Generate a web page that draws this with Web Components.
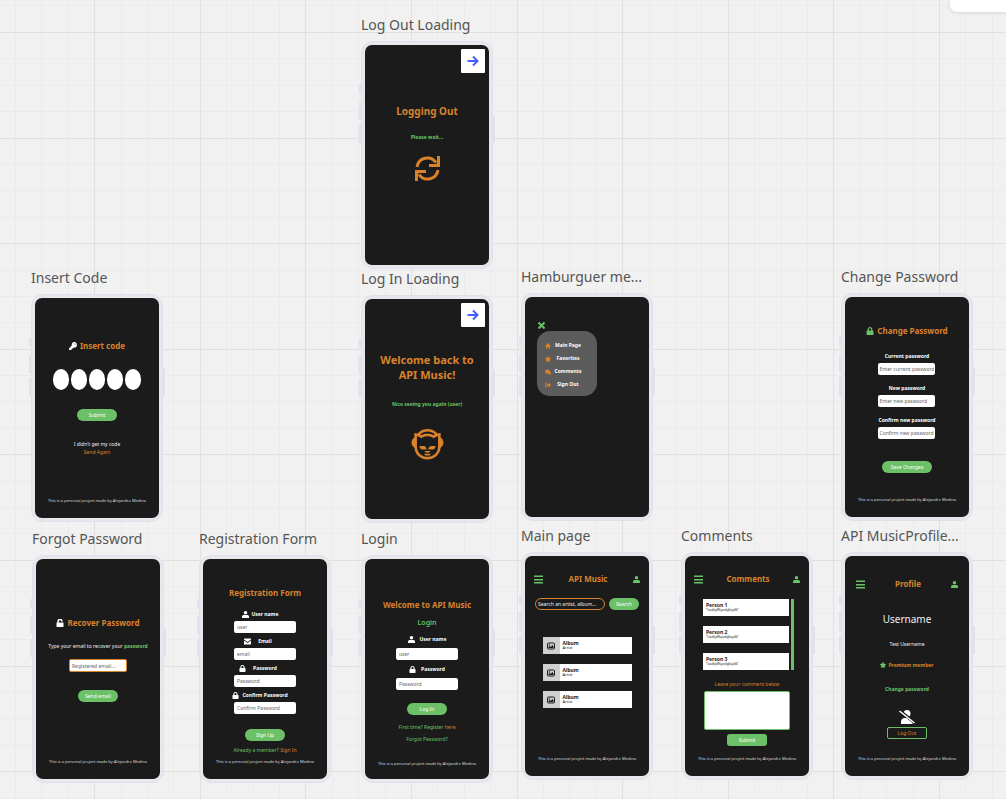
<!DOCTYPE html>
<html lang="en">
<head>
<meta charset="utf-8">
<title>API Music prototype board</title>
<style>
  body { margin: 0; font-family: "Noto Sans", "Open Sans", sans-serif; background: #f1f1f1; }
</style>
</head>
<body>
<proto-board></proto-board>

<template id="board">
  <style>
    :host { display: block; position: relative; min-height: 100vh; overflow: hidden;
      --orange: #d9822b; --green: #6cc168; --ink: #1b1b1b; }
    .grid { position: absolute; inset: 0; width: 100%; height: 100%; }
    .tools { position: absolute; top: -20px; right: -20px; width: 76px; height: 32px; border-radius: 7px;
      background: #fff; box-shadow: 0 1px 4px #0000001c; }
    .col { display: flex; flex-direction: column; }
    .row { display: flex; align-items: center; }
    .end { align-self: flex-end; margin: 4px 4px 0 0; }
    h2, p { margin: 0; }
    h2 { font-size: 8px; line-height: 12px; font-weight: 700; color: var(--orange); display: flex; align-items: center; gap: 3px; }
    h2.big { font-size: 10px; line-height: 16px; }
    h2.hello { font-size: 11px; line-height: 15px; text-align: center; }
    h3 { margin: 0; font-size: 7px; line-height: 8px; font-weight: 600; color: var(--green); }
    p { font-size: 5px; line-height: 8px; color: #eee; white-space: nowrap; }
    p.name { font-size: 10px; line-height: 14px; }
    b, .b { font-weight: 700; }
    .g, .g a { color: var(--green); }
    .o, .g a.o { color: var(--orange); }
    a { color: inherit; text-decoration: none; }
    .head { align-self: stretch; justify-content: space-between; padding: 0 9px; }
    .head.in { padding: 0 11px; }
    .code { gap: 2px; }
    .code input { width: 16px; height: 21px; box-sizing: border-box; border: 0; padding: 0; border-radius: 8px / 10px; background: #fff;
      text-align: center; font: 8px "Noto Sans", sans-serif; }
    .menu { margin: 2px 0 0 12px; align-self: flex-start; width: 60px; height: 65px; box-sizing: border-box; padding: 8px 13px 5px 8px;
      border-radius: 13px; background: #5c5c5c; }
    .menu a { display: grid; grid-template-columns: 6px 1fr; gap: 1px; align-items: center; text-align: center;
      font-size: 5px; line-height: 13px; font-weight: 700; color: #fff; }
    .close { margin: 25px 0 0 13px; align-self: flex-start; padding: 0; border: 0; background: none; display: flex; }
    .fields { gap: 4px; align-items: center; }
    .fields.mid { gap: 5px; }
    .fields.wide { gap: 9px; }
    .search { gap: 4px; }
    .list { gap: 10px; }
    .thread { gap: 2px; align-items: stretch; margin-left: 3px; }
    .bar { width: 3px; background: var(--green); }
    textarea { width: 86px; height: 39px; box-sizing: border-box; border: 1px solid var(--green); border-radius: 2px; padding: 2px;
      background: #fff; resize: none; font: 5px "Noto Sans", sans-serif; display: block; }
    .slash { height: 14px; }
  </style>
  <svg class="grid" aria-hidden="true"><defs><pattern id="p" patternUnits="userSpaceOnUse" x="-11" y="32" width="528" height="528"></pattern></defs><rect width="100%" height="100%" fill="url(#p)"/></svg>
  <div class="tools"></div>

  <phone-frame x="361" y="15" label="Log Out Loading">
    <arrow-card class="end"></arrow-card>
    <h2 class="big" data-t="30">Logging Out</h2>
    <p class="g b" data-t="14">Please wait...</p>
    <ui-icon name="sync" size="25" data-t="15" class="o"></ui-icon>
  </phone-frame>

  <phone-frame x="31" y="268" label="Insert Code" foot>
    <h2 data-t="42"><ui-icon name="key" size="8" style="color:#fff"></ui-icon>Insert code</h2>
    <div class="row code" data-t="17"><input aria-label="Digit 1"><input aria-label="Digit 2"><input aria-label="Digit 3"><input aria-label="Digit 4"><input aria-label="Digit 5"></div>
    <ui-button data-t="19">Submit</ui-button>
    <p data-t="19">I didn't get my code</p>
    <p class="o"><a href="#again">Send Again</a></p>
  </phone-frame>

  <phone-frame x="361" y="269" label="Log In Loading">
    <arrow-card class="end"></arrow-card>
    <h2 class="hello" data-t="25">Welcome back to<br>API Music!</h2>
    <p class="g b" data-t="18">Nice seeing you again (user)</p>
    <ui-icon name="cat" size="33" data-t="19" class="o"></ui-icon>
  </phone-frame>

  <phone-frame x="521" y="267" label="Hamburguer me...">
    <button class="close g" aria-label="Close menu"><ui-icon name="close" size="7"></ui-icon></button>
    <nav class="menu">
      <a href="#main"><ui-icon name="home" size="6" class="o"></ui-icon>Main Page</a>
      <a href="#favorites"><ui-icon name="star" size="6" class="o"></ui-icon>Favorites</a>
      <a href="#comments"><ui-icon name="chat" size="6" class="o"></ui-icon>Comments</a>
      <a href="#out"><ui-icon name="exit" size="6" class="o"></ui-icon>Sign Out</a>
    </nav>
  </phone-frame>

  <phone-frame x="841" y="267" label="Change Password" foot>
    <h2 data-t="28"><ui-icon name="lock" size="8" class="g"></ui-icon>Change Password</h2>
    <div class="col fields wide" data-t="15">
      <ui-field label="Current password" hint="Enter current password" width="57" tight></ui-field>
      <ui-field label="New password" hint="Enter new password" width="57" tight></ui-field>
      <ui-field label="Confirm new password" hint="Confirm new password" width="57" tight></ui-field>
    </div>
    <ui-button width="50" data-t="22">Save Changes</ui-button>
  </phone-frame>

  <phone-frame x="32" y="529" label="Forgot Password" foot>
    <h2 data-t="58"><ui-icon name="unlock" size="8" style="color:#fff"></ui-icon>Recover Password</h2>
    <p data-t="13">Type your email to recover your <b class="g">password</b></p>
    <ui-field hint="Registered email..." width="58" outlined data-t="9"></ui-field>
    <ui-button data-t="18">Send email</ui-button>
  </phone-frame>

  <phone-frame x="199" y="529" label="Registration Form" foot>
    <h2 data-t="28">Registration Form</h2>
    <div class="col fields" data-t="11">
      <ui-field icon="user" label="User name" hint="user" width="62" gap="3"></ui-field>
      <ui-field icon="mail" label="Email" hint="email" width="62" gap="7"></ui-field>
      <ui-field icon="lock" label="Password" hint="Password" width="62" gap="7"></ui-field>
      <ui-field icon="lock" label="Confirm Password" hint="Confirm Password" width="62" gap="3"></ui-field>
    </div>
    <ui-button data-t="15">Sign Up</ui-button>
    <p class="g" data-t="5">Already a member? <a class="o" href="#login">Sign In</a></p>
  </phone-frame>

  <phone-frame x="361" y="529" label="Login" foot low>
    <h2 data-t="40">Welcome to API Music</h2>
    <h3 data-t="8">Login</h3>
    <div class="col fields mid" data-t="8">
      <ui-field icon="user" label="User name" hint="user" width="62" gap="5" group></ui-field>
      <ui-field icon="lock" label="Password" hint="Password" width="62" gap="5" group></ui-field>
    </div>
    <ui-button data-t="13">Log In</ui-button>
    <p class="g" data-t="8">First time? Register <a class="o" href="#register">here</a></p>
    <p class="g" data-t="4"><a href="#forgot">Forgot Password?</a></p>
  </phone-frame>

  <phone-frame x="521" y="526" label="Main page" foot>
    <div class="row head" data-t="17"><ui-icon name="bars" size="9" class="g"></ui-icon><h2>API Music</h2><ui-icon name="user" size="7" class="g"></ui-icon></div>
    <div class="row search" data-t="13"><ui-field hint="Search an artist, album..." width="70" pill></ui-field><ui-button width="30">Search</ui-button></div>
    <div class="col list" data-t="27">
      <media-card title-text="Album" sub="Artist" thumb></media-card>
      <media-card title-text="Album" sub="Artist" thumb></media-card>
      <media-card title-text="Album" sub="Artist" thumb></media-card>
    </div>
  </phone-frame>

  <phone-frame x="681" y="526" label="Comments" foot>
    <div class="row head" data-t="17"><ui-icon name="bars" size="9" class="g"></ui-icon><h2>Comments</h2><ui-icon name="user" size="7" class="g"></ui-icon></div>
    <div class="row thread" data-t="14">
      <div class="col list">
        <media-card title-text="Person 1" sub='"loadkjdflkjasdglkajdlk"'></media-card>
        <media-card title-text="Person 2" sub='"loadkjdflkjasdglkajdlk"'></media-card>
        <media-card title-text="Person 3" sub='"loadkjdflkjasdglkajdlk"'></media-card>
      </div>
      <div class="bar"></div>
    </div>
    <p class="o" data-t="10">Leave your comment below</p>
    <textarea aria-label="Comment" data-t="3"></textarea>
    <ui-button square data-t="4">Submit</ui-button>
  </phone-frame>

  <phone-frame x="841" y="526" label="API MusicProfile..." foot>
    <div class="row head in" data-t="22"><ui-icon name="bars" size="9" class="g"></ui-icon><h2>Profile</h2><ui-icon name="user" size="7" class="g"></ui-icon></div>
    <p class="name" data-t="22">Username</p>
    <p data-t="14">Test Username</p>
    <p class="row b o" data-t="13" style="gap:2px"><ui-icon name="star" size="6" class="g"></ui-icon>Premium member</p>
    <p class="g b" data-t="16"><a href="#change">Change password</a></p>
    <ui-icon class="slash" name="noUser" size="16" style="color:#fff" data-t="17"></ui-icon>
    <ui-button ghost data-t="3">Log Out</ui-button>
  </phone-frame>
</template>

<script>
const ICONS = {
  sync: ['0 0 25 25', '<g fill="none" stroke="currentColor" stroke-width="3"><path d="M2 11A10.500 10.500 0 0 1 21 6.500M23.500 0V9.500H14M23 14A10.500 10.500 0 0 1 4 18.500M1.500 25V15.500H11"/></g><path d="M25 4v7h-7zM0 21v-7h7z"/>'],
  cat: ['0 0 496 512', '<path d="M298.300 373.600c-14.200 13.600-31.300 24.100-50.400 30.500-19-6.400-36.200-16.900-50.300-30.500h100.700zm44-199.600c20-16.900 43.600-29.200 69.600-36.200V299c0 219.400-328 217.600-328 .3V137.700c25.900 6.900 49.600 19.600 69.500 36.400 56.800-40 132.500-39.900 188.900-.1zm-208.800-58.500c64.400-60 164.300-60.100 228.900-.2-7.100 3.500-13.900 7.300-20.600 11.500-58.700-30.500-129.200-30.400-187.900.1-6.300-4-13.900-8.200-20.400-11.400zM43.800 93.200v69.300c-58.400 36.500-58.400 121.100.1 158.300 26.400 245.100 381.700 240.300 407.600 1.500l.3-1.700c58.700-36.300 58.900-121.700.2-158.200V93.200c-17.300.5-34 3-50.100 7.400-82-91.500-225.500-91.500-307.500.1-16.300-4.400-33.100-7-50.600-7.500zM259.200 352s36-.3 61.300-1.500c10.200-.5 21.100-4 25.500-6.500 26.300-15.100 25.400-39.200 26.200-47.400-79.500-.6-99.900-3.900-113 55.400zm-135.500-55.300c.8 8.200-.1 32.300 26.200 47.400 4.400 2.500 15.200 6 25.500 6.500 25.300 1.100 61.300 1.500 61.300 1.500-13.200-59.400-33.700-56.100-113-55.400zm169.100 123.400c-3.200-5.300-6.900-7.300-6.900-7.300-24.800 7.300-52.200 6.900-75.900 0 0 0-2.900 1.500-6.400 6.600-2.800 4.100-3.700 9.600-3.700 9.600 29.100 17.600 67.100 17.600 96.200 0-.1-.1-.3-4-3.300-8.900z"/>'],
  key: ['0 0 16 16', '<path d="M10.500 0a5.500 5.500 0 0 0-5 7L0 13v3h5v-2h2v-2h2l1-1A5.500 5.500 0 1 0 10.500 0z"/><circle cx="12" cy="4" r="1.200" fill="#1b1b1b"/>'],
  close: ['0 0 14 14', '<path d="M1 1l12 12M13 1L1 13" stroke="currentColor" stroke-width="4"/>'],
  home: ['0 0 12 12', '<path d="M6 0L0 6h2v5h3V8h2v3h3V6h2z"/>'],
  star: ['0 0 576 512', '<path d="M259.300 17.800L194 150.200 47.900 171.500c-26.200 3.800-36.700 36.100-17.700 54.600l105.700 103-25 145.500c-4.500 26.300 23.200 46 46.400 33.700L288 439.600l130.700 68.700c23.200 12.200 50.900-7.400 46.400-33.700l-25-145.500 105.700-103c19-18.500 8.500-50.800-17.700-54.600L382 150.200 316.700 17.800c-11.700-23.600-45.600-23.900-57.400 0z" stroke="currentColor" stroke-width="40"/>'],
  chat: ['0 0 12 12', '<ellipse cx="4.500" cy="4.500" rx="4.500" ry="3.500"/><path d="M1 10l1-4 3 2zM12 11l-1-4-3 3z"/><ellipse cx="8.500" cy="7.800" rx="3.500" ry="2.800"/>'],
  exit: ['0 0 12 12', '<path d="M4 2H1v8h3" fill="none" stroke="currentColor" stroke-width="1.600"/><path d="M4 4h3V1l5 5-5 5V8H4z"/>'],
  lock: ['0 0 448 512', '<path d="M400 224h-24v-72C376 68.200 307.800 0 224 0S72 68.200 72 152v72H48c-26.500 0-48 21.500-48 48v192c0 26.500 21.500 48 48 48h352c26.500 0 48-21.500 48-48V272c0-26.500-21.500-48-48-48zm-104 0H152v-72c0-39.700 32.300-72 72-72s72 32.300 72 72v72z"/>'],
  unlock: ['0 0 16 16', '<path d="M4 8V5a4 4 0 0 1 8 0" fill="none" stroke="currentColor" stroke-width="3"/><rect x="1" y="7" width="14" height="9" rx="1"/>'],
  user: ['0 0 14 14', '<circle cx="7" cy="3.500" r="3.500"/><path d="M0 14v-3c0-2 2-3 4-3h6c2 0 4 1 4 3v3z"/>'],
  mail: ['0 0 14 14', '<path d="M0 1h14v2L7 8 0 3zM0 5l7 5 7-5v8H0z"/>'],
  bars: ['0 0 18 18', '<path d="M0 1h18v3H0zM0 8h18v3H0zM0 14h18v3H0z"/>'],
  image: ['0 0 16 16', '<rect x="1" y="2" width="14" height="12" rx="2" fill="none" stroke="currentColor" stroke-width="2"/><circle cx="5" cy="6" r="1.500"/><path d="M3 12v-2l2-2 2 2 4-4 2 3v3z"/>'],
  noUser: ['0 0 32 28', '<circle cx="16" cy="7" r="7"/><path d="M4 28v-5c0-5 4-7 8-7h8c4 0 7 2 7 7v5z"/><path d="M1 1l31 25" stroke="#1b1b1b" stroke-width="6"/><path d="M1 2l30 24" stroke="currentColor" stroke-width="3"/>'],
  arrow: ['0 0 24 24', '<path d="M1 12h20M12 3l9 9-9 9" fill="none" stroke="currentColor" stroke-width="4"/>']
};

const base = (el, html) => { el.attachShadow({ mode: 'open' }).innerHTML = html; };

customElements.define('ui-icon', class extends HTMLElement {
  connectedCallback() {
    if (this.shadowRoot) return;
    const [box, art] = ICONS[this.getAttribute('name')], s = this.getAttribute('size');
    base(this, `<style>:host{display:block;flex:none}svg{display:block;fill:currentColor;width:${s}px;height:${s}px}:host(.slash) svg{height:14px}</style><svg viewBox="${box}" aria-hidden="true">${art}</svg>`);
  }
});

customElements.define('arrow-card', class extends HTMLElement {
  connectedCallback() {
    if (this.shadowRoot) return;
    base(this, `<style>:host{display:block}a{display:grid;place-items:center;width:24px;height:24px;border-radius:1px;background:#fff;color:#4262ff}</style>
      <a href="#next" aria-label="Next"><ui-icon name="arrow" size="12"></ui-icon></a>`);
  }
});

customElements.define('ui-button', class extends HTMLElement {
  connectedCallback() {
    if (this.shadowRoot) return;
    base(this, `<style>:host{display:block}
      button{display:block;width:${this.getAttribute('width') || 40}px;height:12px;padding:0;border:0;border-radius:6px;background:var(--green);color:#fff;font:5px/12px "Noto Sans",sans-serif;white-space:nowrap}
      :host([square]) button{border-radius:3px}
      :host([ghost]) button{border:1px solid var(--green);border-radius:2px;background:none;color:var(--orange);line-height:10px}</style>
      <button type="button"><slot></slot></button>`);
  }
});

customElements.define('ui-field', class extends HTMLElement {
  connectedCallback() {
    if (this.shadowRoot) return;
    const a = n => this.getAttribute(n), label = a('label');
    base(this, `<style>:host{display:flex;flex-direction:column;align-items:center}
      .cap{display:grid;grid-template-columns:1fr auto 1fr;gap:${a('gap') || 0}px;align-items:center;align-self:stretch;margin-bottom:3px}
      :host([group]) .cap{display:flex;justify-content:center;margin-bottom:5px}
      ui-icon{justify-self:end;color:#fff}
      label{grid-column:2;font-size:5px;line-height:8px;font-weight:700;color:#fff;white-space:nowrap}
      input{display:block;width:${a('width')}px;height:12px;box-sizing:border-box;margin:0;padding:0 3px;border:0;border-radius:2px;background:#fff;color:#333;font:5px "Noto Sans",sans-serif}
      input::placeholder{color:#666;opacity:1}
      :host([tight]) input{padding:0 1px}
      :host([outlined]) input{border:1px solid var(--orange);height:13px;padding:0 2px}
      :host([pill]) input{border:1px solid var(--orange);border-radius:6px;background:none;padding:0 2px}
      :host([pill]) input::placeholder{color:#eee}</style>
      ${label ? `<div class="cap">${a('icon') ? `<ui-icon name="${a('icon')}" size="7"></ui-icon>` : ''}<label for="f">${label}</label></div>` : ''}
      <input id="f" type="text" placeholder="${a('hint')}" ${label ? '' : `aria-label="${a('hint')}"`}>`);
  }
});

customElements.define('media-card', class extends HTMLElement {
  connectedCallback() {
    if (this.shadowRoot) return;
    base(this, `<style>:host{display:flex;height:17px;width:86px;background:#fff;color:#1b1b1b}
      :host([thumb]){width:89px}
      .pic{width:17px;display:grid;place-items:center;background:#d0d0d0}
      .txt{padding:3px 3px 0}
      b,span{display:block;white-space:nowrap}
      b{font-size:5px;line-height:6px}span{font-size:3px;line-height:4px}
      :host([thumb]) span{font-size:4px}</style>
      ${this.hasAttribute('thumb') ? '<div class="pic"><ui-icon name="image" size="8"></ui-icon></div>' : ''}
      <div class="txt"><b></b><span></span></div>`);
    this.shadowRoot.querySelector('b').textContent = this.getAttribute('title-text');
    this.shadowRoot.querySelector('span').textContent = this.getAttribute('sub');
  }
});

customElements.define('phone-frame', class extends HTMLElement {
  connectedCallback() {
    if (this.shadowRoot) return;
    base(this, `<style>:host{position:absolute;left:${this.getAttribute('x')}px;top:${this.getAttribute('y')}px;width:132px}
      .label{font-size:14px;line-height:20px;color:#555;white-space:nowrap}
      .case{position:relative;margin-top:6px;padding:3px;border:1px solid #dfe0ea;border-radius:12px;background:#e7e8ee}
      .screen{display:flex;flex-direction:column;align-items:center;height:220px;box-sizing:border-box;padding-bottom:13px;border-radius:7px;background:var(--ink);overflow:hidden}
      :host([low]) .screen{padding-bottom:11px}
      .key{position:absolute;left:-3px;width:2px;height:18px;background:#e1e2eb;border-radius:1px 0 0 1px}
      .mute{top:43px;height:9px}.up{top:60px}.down{top:83px}
      .power{left:auto;right:-3px;top:73px;height:28px;border-radius:0 1px 1px 0}
      .foot{margin:auto 0 0;font-size:4px;line-height:8px;color:#ddd;white-space:nowrap}</style>
      <div class="label">${this.getAttribute('label')}</div>
      <div class="case"><i class="key mute"></i><i class="key up"></i><i class="key down"></i><i class="key power"></i>
      <div class="screen"><slot></slot>${this.hasAttribute('foot') ? '<p class="foot">This is a personal project made by Alejandro Medina</p>' : ''}</div></div>`);
  }
});

customElements.define('proto-board', class extends HTMLElement {
  connectedCallback() {
    const root = this.attachShadow({ mode: 'open' });
    root.append(document.getElementById('board').content.cloneNode(true));
    root.querySelectorAll('[data-t]').forEach(e => { e.style.marginTop = e.dataset.t + 'px'; });
    let minor = '', major = '';
    for (let i = 0; i < 20; i++) {
      const x = Math.floor(i * 26.4), y = Math.floor(i * 26.4 + .4);
      const lines = c => `<rect x="${x}" y="0" width="1" height="528" fill="${c}"/><rect x="0" y="${y}" width="528" height="1" fill="${c}"/>`;
      if (i % 4) minor += lines('#ebebeb'); else major += lines('#e0e0e0');
    }
    root.querySelector('#p').innerHTML = minor + major;
  }
});
</script>
</body>
</html>
